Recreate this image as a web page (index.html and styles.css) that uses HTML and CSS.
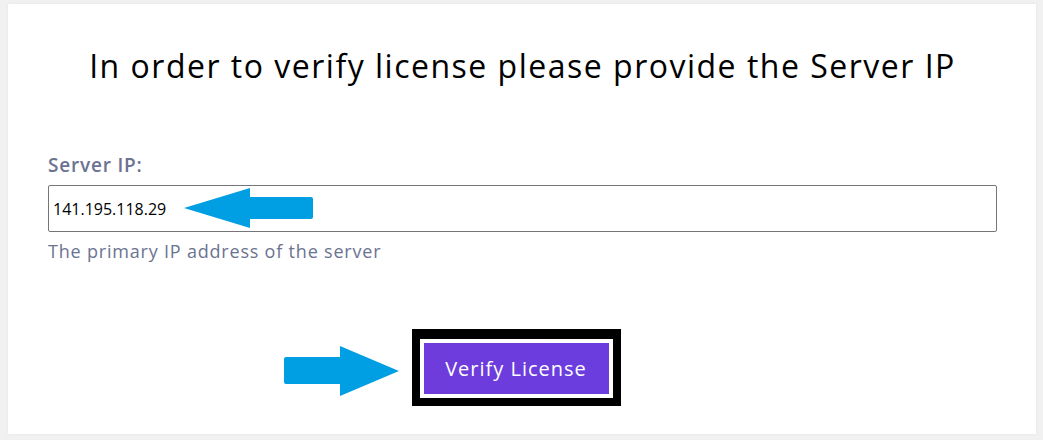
FILE: index.html
```html
<!DOCTYPE html>
<html lang="en">
<head>
<meta charset="utf-8">
<title>Verify License</title>
<link rel="stylesheet" href="styles.css">
</head>
<body>
<main class="card">
  <h1 class="title">In order to verify license please provide the Server IP</h1>
  <form class="form">
    <label class="label" for="ip">Server IP:</label>
    <div class="field">
      <input class="input" id="ip" type="text" value="141.195.118.29">
      <svg class="arrow arrow-left" width="131" height="42" viewBox="0 0 131 42" aria-hidden="true">
        <path d="M0 21 L66 1 L66 10 L127 10 Q129 10 129 12 L129 30 Q129 32 127 32 L66 32 L66 41 Z" fill="#009fe3"/>
      </svg>
    </div>
    <p class="help">The primary IP address of the server</p>
    <div class="actions">
      <svg class="arrow arrow-right" width="116" height="51" viewBox="0 0 116 51" aria-hidden="true">
        <path d="M2 11 L56 11 L56 0 L115 25 L56 50 L56 38 L2 38 Q0 38 0 36 L0 13 Q0 11 2 11 Z" fill="#009fe3"/>
      </svg>
      <div class="frame">
        <button class="btn" type="button">Verify License</button>
      </div>
    </div>
  </form>
</main>
</body>
</html>
```

FILE: styles.css
```css
html, body {
  margin: 0;
  padding: 0;
}
body {
  background: #f1f1f1;
  font-family: "Open Sans", "Noto Sans", sans-serif;
  width: 1043px;
  height: 440px;
  overflow: hidden;
}
.card {
  box-sizing: border-box;
  margin: 4px 7px 0 8px;
  height: 430px;
  background: #ffffff;
  box-shadow: 0 0 3px rgba(0, 0, 0, 0.06);
  padding: 38px 39px 0 40px;
}
.title {
  margin: 0;
  text-align: center;
  font-size: 32px;
  font-weight: 400;
  letter-spacing: 1.5px;
  line-height: 48px;
  color: #000;
}
.form {
  margin-top: 62px;
}
.label {
  display: block;
  font-size: 19px;
  letter-spacing: 0.8px;
  line-height: 26px;
  color: #6b7391;
  font-weight: 600;
}
.field {
  position: relative;
  margin-top: 7px;
}
.input {
  display: block;
  box-sizing: border-box;
  width: 100%;
  height: 47px;
  border: 1px solid #767676;
  border-radius: 2px;
  padding: 0 4px;
  font-family: "Open Sans", "Noto Sans", sans-serif;
  font-size: 16px;
  color: #000;
  outline: none;
  background: #fff;
}
.arrow {
  position: absolute;
}
.arrow-left {
  left: 136px;
  top: 2px;
}
.help {
  margin: 7px 0 0;
  font-size: 18px;
  letter-spacing: 0.8px;
  line-height: 24px;
  color: #6b7391;
}
.actions {
  position: relative;
  display: flex;
  justify-content: center;
  margin-top: 66px;
  padding-right: 13px;
}
.arrow-right {
  left: 236px;
  top: 17px;
}
.frame {
  border: 8px solid #000;
  border-top-width: 10px;
  padding: 4px;
  background: #fff;
}
.btn {
  display: block;
  width: 185px;
  height: 51px;
  border: 0;
  border-radius: 0;
  background: linear-gradient(90deg, #6f3bdb, #6a3ddf);
  color: #fff;
  font-family: "Open Sans", "Noto Sans", sans-serif;
  font-size: 20px;
  letter-spacing: 1px;
  cursor: pointer;
}
```
